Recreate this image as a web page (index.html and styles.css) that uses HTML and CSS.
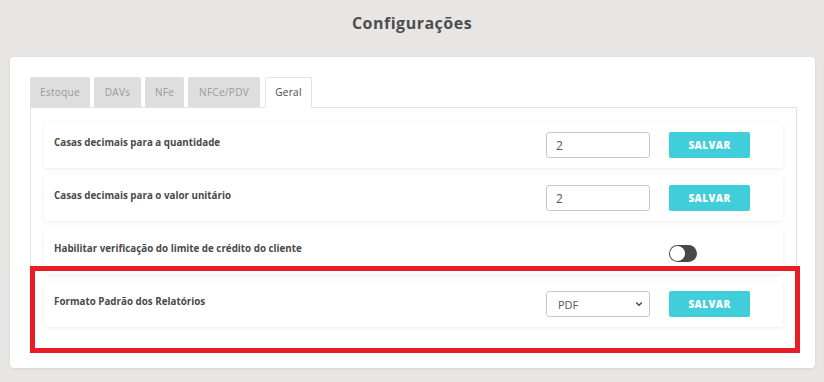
FILE: index.html
```html
<!DOCTYPE html>
<html lang="pt-BR">
<head>
<meta charset="utf-8">
<title>Configurações</title>
<link rel="stylesheet" href="styles.css">
</head>
<body>
<h1 class="page-title">Configurações</h1>
<div class="card">
  <ul class="tabs">
    <li class="tab">Estoque</li>
    <li class="tab">DAVs</li>
    <li class="tab">NFe</li>
    <li class="tab">NFCe/PDV</li>
    <li class="tab active">Geral</li>
  </ul>
  <div class="panel">
    <div class="row">
      <span class="label">Casas decimais para a quantidade</span>
      <div class="controls">
        <input class="field" type="text" value="2">
        <button class="btn">SALVAR</button>
      </div>
    </div>
    <div class="row">
      <span class="label">Casas decimais para o valor unitário</span>
      <div class="controls">
        <input class="field" type="text" value="2">
        <button class="btn">SALVAR</button>
      </div>
    </div>
    <div class="row">
      <span class="label">Habilitar verificação do limite de crédito do cliente</span>
      <div class="controls">
        <span class="field-spacer"></span>
        <span class="toggle"><span class="knob"></span></span>
        <span class="btn-spacer"></span>
      </div>
    </div>
    <div class="row">
      <span class="label">Formato Padrão dos Relatórios</span>
      <div class="controls">
        <div class="select">
          <span>PDF</span>
          <svg class="chev" width="8" height="6" viewBox="0 0 8 6"><path d="M1.2 1.5 L4 4.3 L6.8 1.5" fill="none" stroke="#444" stroke-width="1.3"/></svg>
        </div>
        <button class="btn">SALVAR</button>
      </div>
    </div>
  </div>
  <div class="highlight"></div>
</div>
</body>
</html>
```
FILE: styles.css
```css
* { box-sizing: border-box; }
html, body { margin: 0; padding: 0; }
body {
  background: #e7e6e4;
  font-family: "Open Sans", "Liberation Sans", sans-serif;
  color: #444;
  width: 824px;
  height: 382px;
  overflow: hidden;
}
.page-title {
  margin: 0;
  padding-top: 12px;
  height: 57px;
  text-align: center;
  font-size: 16px;
  font-weight: 700;
  color: #4e4e4e;
  letter-spacing: 0.5px;
}
.card {
  position: relative;
  margin: 0 9px 0 10px;
  height: 311px;
  background: #fff;
  border-radius: 4px;
  box-shadow: 0 1px 3px rgba(0, 0, 0, 0.08);
  padding: 20px 18px 0 20px;
}
.tabs {
  list-style: none;
  margin: 0;
  padding: 0;
  display: flex;
  gap: 4px;
  height: 31px;
  position: relative;
  z-index: 1;
}
.tab {
  background: #dedede;
  color: #9a9a9a;
  font-size: 10px;
  letter-spacing: 0.3px;
  height: 30px;
  line-height: 30px;
  text-align: center;
  border-radius: 2px 2px 0 0;
}
.tab:nth-child(1) { width: 60px; }
.tab:nth-child(2) { width: 47px; }
.tab:nth-child(3) { width: 39px; }
.tab:nth-child(4) { width: 72px; }
.tab.active {
  margin-left: 1px;
  width: 47px;
  height: 31px;
  background: #fff;
  color: #444;
  border: 1px solid #e2e2e2;
  border-bottom-color: #fff;
  line-height: 28px;
}
.panel {
  margin-top: -1px;
  border: 1px solid #e2e2e2;
  border-bottom: none;
  height: 243px;
  padding: 14px 13px 0 13px;
  display: flex;
  flex-direction: column;
  gap: 7px;
}
.row {
  height: 46px;
  flex: none;
  display: flex;
  align-items: center;
  justify-content: space-between;
  padding: 0 33px 0 10px;
  background: #fff;
  border-radius: 3px;
  box-shadow: 0 1px 4px rgba(0, 0, 0, 0.08);
}
.label {
  font-size: 9.8px;
  font-weight: 700;
  color: #4a4a4a;
  margin-top: -5px;
}
.controls {
  display: flex;
  align-items: center;
  gap: 19px;
}
.field {
  width: 104px;
  height: 26px;
  border: 1px solid #c9c9c9;
  border-radius: 3px;
  padding: 0 9px;
  font-family: "Open Sans", "Liberation Sans", sans-serif;
  font-size: 12px;
  color: #555;
  outline: none;
}
.field-spacer { width: 104px; }
.btn-spacer { width: 34px; }
.btn {
  width: 81px;
  height: 26px;
  border: none;
  border-radius: 2px;
  background: #40ceda;
  color: #fff;
  font-family: "Open Sans", "Liberation Sans", sans-serif;
  font-size: 10px;
  font-weight: 800;
  letter-spacing: 0.4px;
  padding: 0;
}
.toggle {
  width: 28px;
  height: 17px;
  margin-top: 4px;
  border-radius: 9px;
  background: #484848;
  position: relative;
}
.knob {
  position: absolute;
  left: 1px;
  top: 1px;
  width: 15px;
  height: 15px;
  border-radius: 50%;
  background: #fff;
}
.select {
  width: 104px;
  height: 26px;
  border: 1px solid #c9c9c9;
  border-radius: 3px;
  padding: 0 6px 0 11px;
  display: flex;
  align-items: center;
  justify-content: space-between;
  font-size: 11px;
  color: #555;
}
.highlight {
  position: absolute;
  left: 20px;
  top: 209px;
  width: 770px;
  height: 87px;
  border: 5px solid #e81d25;
  pointer-events: none;
}
```
